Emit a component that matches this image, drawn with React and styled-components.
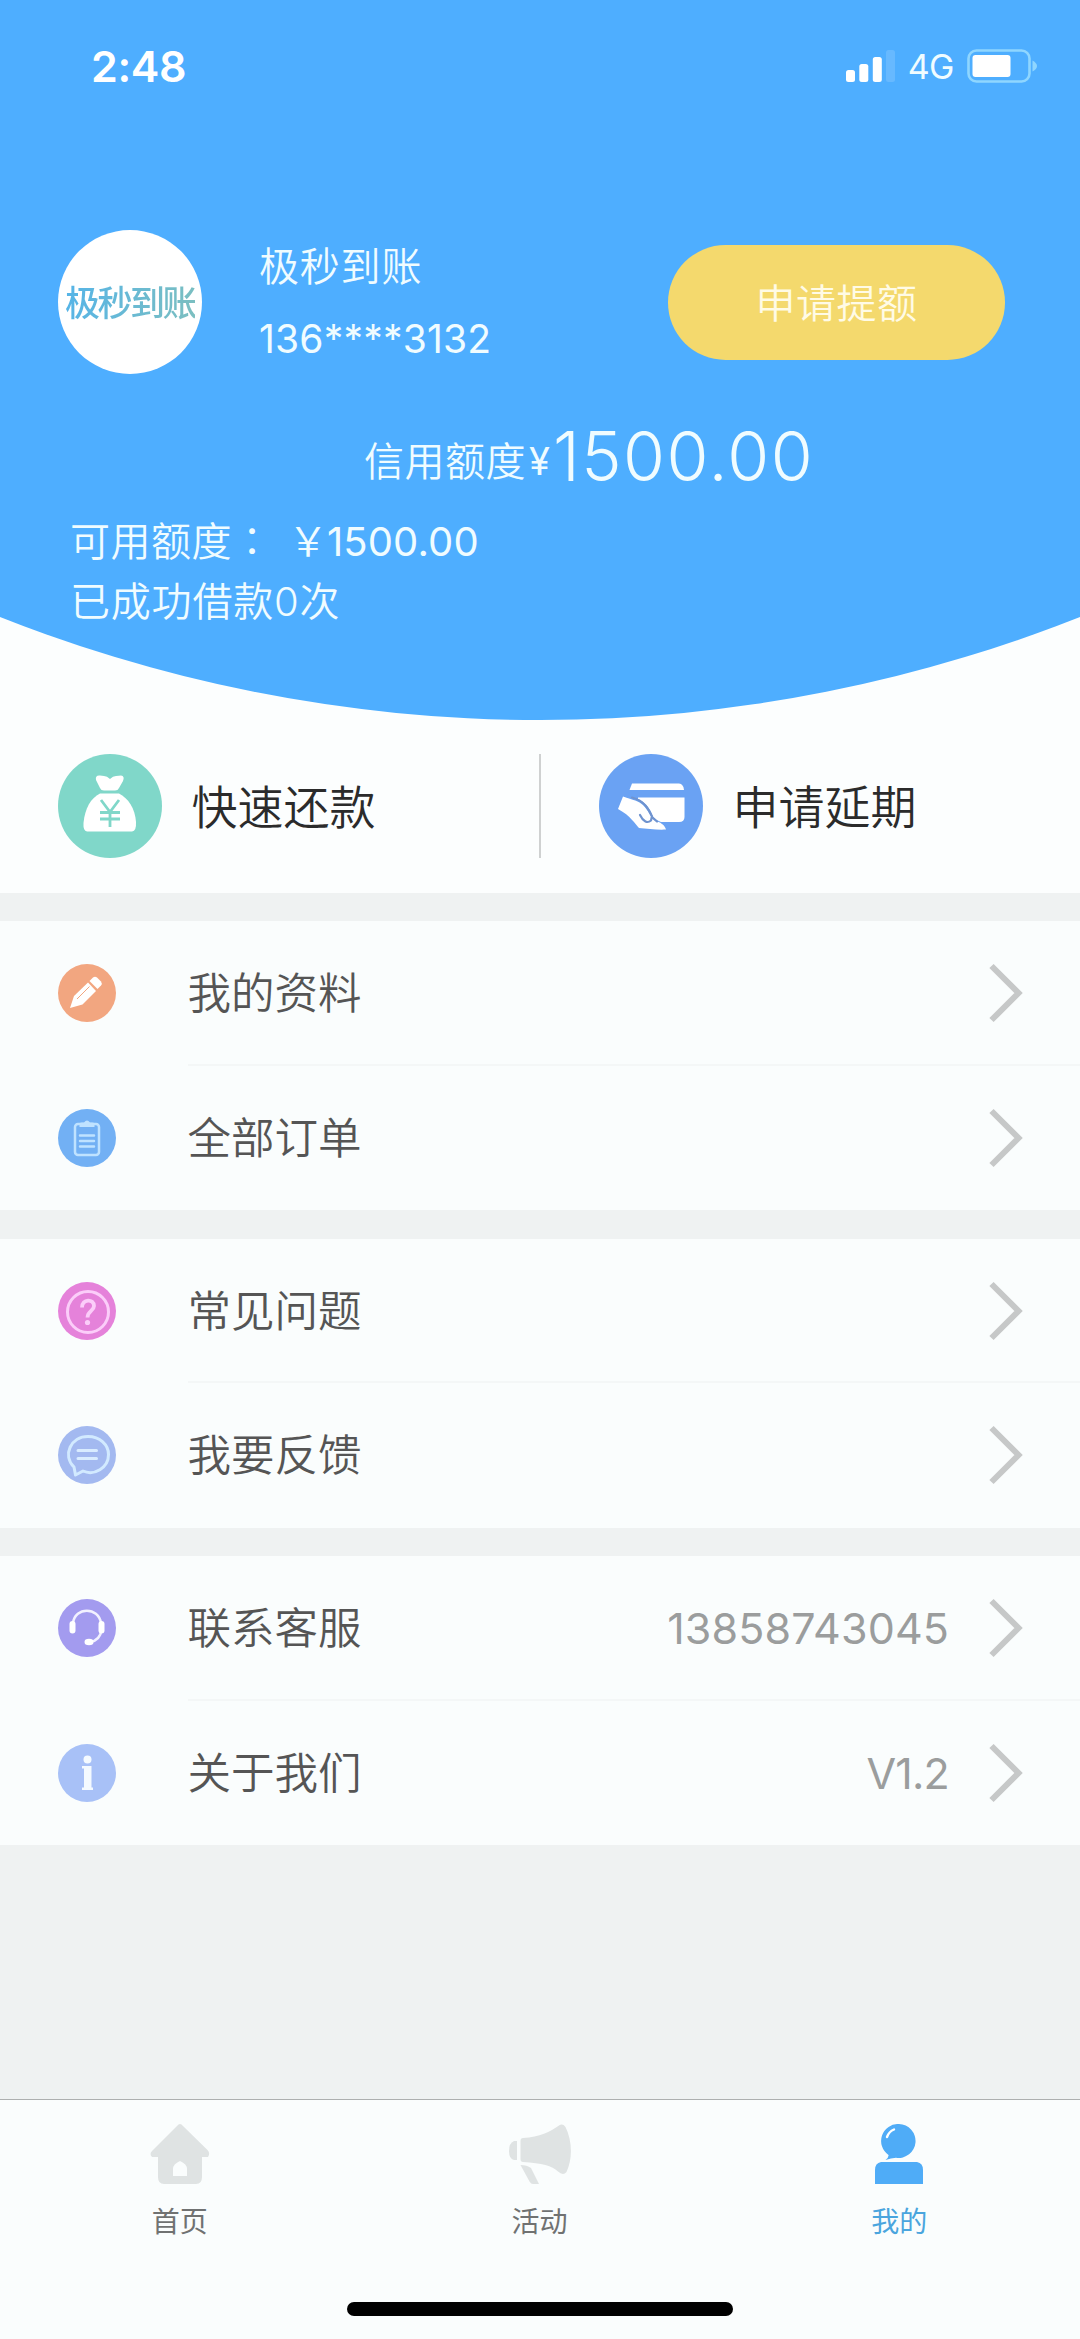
import React from 'react';
import styled, { createGlobalStyle } from 'styled-components';

const menuGroups = [
  [
    { label: '我的资料', icon: <PencilIcon /> },
    { label: '全部订单', icon: <OrderIcon /> },
  ],
  [
    { label: '常见问题', icon: <QuestionIcon /> },
    { label: '我要反馈', icon: <FeedbackIcon /> },
  ],
  [
    { label: '联系客服', icon: <ServiceIcon />, value: '13858743045' },
    { label: '关于我们', icon: <InfoIcon />, value: 'V1.2', tight: true },
  ],
];

const tabs = [
  { label: '首页', icon: <HomeIcon /> },
  { label: '活动', icon: <HornIcon /> },
  { label: '我的', icon: <MineIcon />, active: true },
];

export default function App() {
  return (
    <>
      <GlobalStyle />
      <Page>
        <Header>
          <StatusBar>
            <Time>2:48</Time>
            <StatusRight>
              <SignalIcon />
              <Network>4G</Network>
              <BatteryIcon />
            </StatusRight>
          </StatusBar>

          <Profile>
            <Avatar>
              <AvatarText>极秒到账</AvatarText>
            </Avatar>
            <UserInfo>
              <UserName>极秒到账</UserName>
              <Phone>136****3132</Phone>
            </UserInfo>
            <RaiseBtn type="button">申请提额</RaiseBtn>
          </Profile>

          <Credit>
            <CreditLabel>信用额度</CreditLabel>
            <CreditSign>¥</CreditSign>
            <CreditValue>1500.00</CreditValue>
          </Credit>
          <Available>
            <AvailableLabel>可用额度：</AvailableLabel>
            <AvailableSign>￥</AvailableSign>
            <AvailableValue>1500.00</AvailableValue>
          </Available>
          <LoanCount>已成功借款0次</LoanCount>
        </Header>

        <Actions>
          <Action>
            <MoneyBagIcon />
            <ActionText>快速还款</ActionText>
          </Action>
          <Divider />
          <Action>
            <CardIcon />
            <ActionText>申请延期</ActionText>
          </Action>
        </Actions>

        <Menu>
          {menuGroups.map((group) => (
            <MenuGroup key={group[0].label}>
              {group.map((item) => (
                <MenuRow key={item.label}>
                  {item.icon}
                  <MenuBody>
                    <MenuLabel>{item.label}</MenuLabel>
                    {item.value && <MenuValue $tight={item.tight}>{item.value}</MenuValue>}
                    <ArrowIcon />
                  </MenuBody>
                </MenuRow>
              ))}
            </MenuGroup>
          ))}
        </Menu>

        <Footer>
          <TabBar>
            {tabs.map((tab) => (
              <Tab key={tab.label}>
                {tab.icon}
                <TabText $active={tab.active}>{tab.label}</TabText>
              </Tab>
            ))}
          </TabBar>
          <HomeIndicator />
        </Footer>
      </Page>
    </>
  );
}

function SignalIcon() {
  return (
    <svg width="50" height="32" viewBox="0 0 50 32" fill="#fff">
      <rect x="0" y="20" width="9" height="12" rx="2.5" />
      <rect x="13.3" y="14" width="9" height="18" rx="2.5" />
      <rect x="26.8" y="7" width="9" height="25" rx="2.5" />
      <rect x="40" y="0" width="9" height="32" rx="2.5" opacity="0.14" />
    </svg>
  );
}

function BatteryIcon() {
  return (
    <svg width="71" height="34" viewBox="0 0 71 34">
      <rect x="1.5" y="1.5" width="61" height="31" rx="8" fill="none" stroke="#8fd6ff" strokeWidth="2.6" />
      <rect x="5.5" y="6" width="38" height="22" rx="3" fill="#fff" />
      <path d="M65.500 11.500 Q70 14 70 17 Q70 20 65.500 22.500Z" fill="#8fd6ff" />
    </svg>
  );
}

function MoneyBagIcon() {
  return (
    <svg width="104" height="104" viewBox="0 0 104 104">
      <circle cx="52" cy="52" r="52" fill="#80d7c9" />
      <path
        d="M38 26 Q37 21 42 21.500 Q44 21.500 46 22 Q49 22 52 25 Q55 22 58 22 Q61 21.500 63 21.500 Q67 22 65 27 L61 34 Q60 36.500 57 36.500 H46 Q43 36.500 42 34Z"
        fill="#fff"
      />
      <path
        d="M42 39.500 H61 C70 44 77 54 78 68 Q78.500 77 74 77.500 H29 Q25 77 25.500 69 C27 54 33 44 42 39.500Z"
        fill="#fff"
      />
      <path
        d="M43 46 L52 58 L61 46 M52 58 V73 M42 58.500 H62 M42 65 H62"
        fill="none"
        stroke="#80d7c9"
        strokeWidth="2.8"
      />
    </svg>
  );
}

function CardIcon() {
  return (
    <svg width="104" height="104" viewBox="0 0 104 104">
      <circle cx="52" cy="52" r="52" fill="#6aa2f3" />
      <path d="M33 29.500 H80 Q84.500 30 85 36 H30.500Z" fill="#fff" />
      <path
        d="M39 43.500 H85.500 V63 Q85.500 68 80 68 H62 Q56.500 66 54 63 C51 54 46 48 39 45Z"
        fill="#fff"
      />
      <path
        d="M24 42.500 C34 46 40 47 44 51 C50 57 51 63 56 66.500 C61 68 66 71 67 75.500 C60 76 48 75 40 74 C36 70 32 62 19 55Z"
        fill="#fff"
      />
      <path
        d="M33 43.500 C46 47 50 56 53.500 63.500 L58 67.500 M41 61 C44 67 48 70 52 66.500 L53 62"
        fill="none"
        stroke="#6f93cf"
        strokeWidth="2.2"
        strokeLinecap="round"
      />
    </svg>
  );
}

function PencilIcon() {
  return (
    <svg width="58" height="58" viewBox="0 0 58 58">
      <circle cx="29" cy="29" r="29" fill="#f2a680" />
      <path d="M12 44 L16 32 L30 18.500 L38 27 L24.500 40.500Z" fill="#fff" />
      <path d="M31.500 17 L35 13.500 Q37 12 39 13.500 L43 17.500 Q44.500 19.500 43 21.500 L39.500 25Z" fill="#fff" />
      <path d="M19 35 L31.500 22.500" stroke="#f2a680" strokeWidth="1" />
    </svg>
  );
}

function OrderIcon() {
  return (
    <svg width="58" height="58" viewBox="0 0 58 58">
      <circle cx="29" cy="29" r="29" fill="#72b0f4" />
      <g fill="none" stroke="#bfe2ff" strokeWidth="2.5" strokeLinecap="round">
        <rect x="17" y="15" width="24" height="31" rx="3" />
        <path d="M22 26.500 H36 M22 32 H36 M22 37.500 H36" />
      </g>
      <path d="M21.500 18 V14.500 Q22 13.500 24 13.500 H26 Q29 9.500 32 13.500 H34 Q36 13.500 36.500 14.500 V18Z" fill="#bfe2ff" />
    </svg>
  );
}

function QuestionIcon() {
  return (
    <svg width="58" height="58" viewBox="0 0 58 58">
      <circle cx="29" cy="29" r="29" fill="#e582da" />
      <g fill="none" stroke="#fbcdf9" strokeWidth="3">
        <circle cx="30" cy="30" r="20.500" />
        <path d="M24 25.500 C24 16.500 36 16.500 36 24 C36 29 29.500 29 29.500 35.500" strokeWidth="3.800" />
      </g>
      <circle cx="29.500" cy="40.500" r="2.600" fill="#fbcdf9" />
    </svg>
  );
}

function FeedbackIcon() {
  return (
    <svg width="58" height="58" viewBox="0 0 58 58">
      <circle cx="29" cy="29" r="29" fill="#a3b9f0" />
      <path
        d="M17.500 49 L16 41 C4 29 13 10.500 30 10.500 C42 10.500 50.500 19 50.500 28.500 C50.500 42 36 50 25 45 Z"
        fill="none"
        stroke="#d2eaff"
        strokeWidth="3"
        strokeLinejoin="round"
      />
      <path d="M20 24.500 H38.500 M20 32.500 H38.500" stroke="#d9ecff" strokeWidth="3" strokeLinecap="round" />
    </svg>
  );
}

function ServiceIcon() {
  return (
    <svg width="58" height="58" viewBox="0 0 58 58">
      <circle cx="29" cy="29" r="29" fill="#a39bef" />
      <path
        d="M15 24 C17 7.500 40.500 7.500 43 24 M43.500 31 C42.500 38 39 42 32 43"
        fill="none"
        stroke="#f2f1ff"
        strokeWidth="2.500"
      />
      <rect x="11.500" y="22" width="6" height="12.500" rx="3" fill="#fff" />
      <rect x="40.500" y="22" width="6" height="12.500" rx="3" fill="#fff" />
      <ellipse cx="31" cy="43" rx="4.500" ry="3.300" fill="#fff" />
    </svg>
  );
}

function InfoIcon() {
  return (
    <svg width="58" height="58" viewBox="0 0 58 58">
      <circle cx="29" cy="29" r="29" fill="#a8c1f7" />
      <circle cx="29.500" cy="15.500" r="4" fill="#f4faff" />
      <path d="M24 22 H33.500 V43.500 H35 V46 H24 V43.500 H26 V24.500 H24Z" fill="#f4faff" />
    </svg>
  );
}

function ArrowIcon() {
  return (
    <svg width="34" height="60" viewBox="0 0 34 60">
      <path d="M2.500 3 L29.500 30 L2.500 57" fill="none" stroke="#c6c8c8" strokeWidth="6" />
    </svg>
  );
}

function HomeIcon() {
  return (
    <svg width="60" height="60" viewBox="0 0 60 60" fill="#dfe3e3">
      <path
        fillRule="evenodd"
        d="M30 0 Q31.500 0 33 2 L57.500 26 Q60.500 29 58 33 H52 V53 Q52 60 46 60 H14 Q8 60 8 53 V33 H2 Q-1 30 2 27 L27 2 Q28.500 0 30 0Z M30 37 Q23 40 23 45 V52 H37 V45 Q37 40 30 37Z"
      />
    </svg>
  );
}

function HornIcon() {
  return (
    <svg width="64" height="60" viewBox="0 0 64 60" fill="#dfe3e3">
      <path d="M9 17 V36 H6 Q1 35 1 27 Q1 19 6 17Z" />
      <path d="M15 14 C32 13 42 8 51 1.500 Q54.500 -1 57.500 3 C64 16 65 34 58.500 48 Q55 52 50 47.500 C44 42 34 39 15 38 Q12.500 38 12.500 35 V17 Q12.500 14 15 14Z" />
      <path d="M12.500 41 Q19 41 23 44 L31 60 H25 Q23 60 21.500 57.500Z" />
    </svg>
  );
}

function MineIcon() {
  return (
    <svg width="50" height="60" viewBox="0 0 50 60" fill="#4facf7">
      <path d="M25 0 A17 17 0 1 1 22 33.800 Q17 34 11.500 36 Q15 33 14.500 31 A17 17 0 0 1 25 0Z" />
      <path d="M7 38 H43 Q49 39 49 46 V60 H1 V46 Q1 39 7 38Z" />
      <path d="M13 13 Q15 7.500 20 5.500" fill="none" stroke="#fff" strokeWidth="2.400" strokeLinecap="round" />
    </svg>
  );
}

const GlobalStyle = createGlobalStyle`
  * {
    box-sizing: border-box;
  }

  body {
    margin: 0;
    font-family: Inter, 'Noto Sans CJK SC', sans-serif;
  }

  svg {
    display: block;
    flex-shrink: 0;
  }
`;

const Page = styled.div`
  display: flex;
  flex-direction: column;
  width: 1080px;
  height: 2339px;
  overflow: hidden;
  background-color: #fcfefe;
`;

const Header = styled.header`
  flex-shrink: 0;
  height: 720px;
  background-color: #4eaeff;
  color: #f0fcff;
  clip-path: circle(1467px at 50% -747px);
`;

const StatusBar = styled.div`
  display: flex;
  align-items: center;
  justify-content: space-between;
  height: 132px;
  padding: 0 42px 0 91px;
`;

const Time = styled.span`
  color: #fff;
  font-size: 43px;
  font-weight: 600;
  letter-spacing: -0.4px;
`;

const StatusRight = styled.div`
  display: flex;
  align-items: center;
`;

const Network = styled.span`
  margin: 2px 13px 0 12px;
  font-size: 34px;
  letter-spacing: -0.5px;
  line-height: 40px;
`;

const Profile = styled.div`
  display: flex;
  align-items: center;
  height: 144px;
  margin-top: 98px;
  padding: 0 75px 0 58px;
`;

const Avatar = styled.div`
  display: flex;
  align-items: center;
  justify-content: center;
  width: 144px;
  height: 144px;
  border-radius: 50%;
  background-color: #fff;
`;

const AvatarText = styled.span`
  padding-top: 2px;
  background-image: linear-gradient(100deg, #55b4e8, #7cbfc0);
  background-clip: text;
  color: transparent;
  font-size: 35px;
  font-weight: 500;
  letter-spacing: -2.5px;
  line-height: 40px;
  white-space: nowrap;
`;

const UserInfo = styled.div`
  display: flex;
  flex: 1;
  flex-direction: column;
  gap: 24px;
  margin-left: 57px;
  padding-top: 2px;
  font-size: 40px;
  font-weight: 350;
  line-height: 48px;
`;

const UserName = styled.span`
  letter-spacing: 0.8px;
`;

const Phone = styled.span`
  font-size: 39px;
  font-weight: 400;
  letter-spacing: 0.2px;
`;

const RaiseBtn = styled.button`
  width: 337px;
  height: 115px;
  padding: 0 0 3px;
  border: none;
  border-radius: 58px;
  background-color: #f4d96d;
  color: #fffbe6;
  font-family: inherit;
  font-size: 40px;
  font-weight: 350;
  letter-spacing: 0.5px;
`;

const Credit = styled.div`
  display: flex;
  align-items: flex-start;
  height: 80px;
  margin-top: 42px;
  padding-left: 364px;
  font-weight: 350;
  line-height: 80px;
`;

const CreditLabel = styled.span`
  padding-top: 6px;
  font-size: 40px;
  letter-spacing: 0.5px;
`;

const CreditSign = styled.span`
  width: 27px;
  padding: 5px 0 0 3px;
  font-size: 38px;
  font-weight: 400;
`;

const CreditValue = styled.span`
  font-size: 68px;
  letter-spacing: 1.5px;
`;

const Available = styled.div`
  display: flex;
  height: 60px;
  margin-top: 16px;
  padding-left: 70px;
  font-size: 40px;
  font-weight: 350;
  line-height: 60px;
`;

/* the TC face centres the full-width colon in its box */
const AvailableLabel = styled.span`
  width: 218px;
  font-family: Inter, 'Noto Sans CJK TC', sans-serif;
  letter-spacing: 0.5px;
`;

const AvailableSign = styled.span`
  width: 39px;
`;

const AvailableValue = styled.span`
  font-weight: 400;
  letter-spacing: 0.1px;
`;

const LoanCount = styled.div`
  padding-left: 70px;
  font-size: 40px;
  font-weight: 350;
  letter-spacing: 0.8px;
  line-height: 60px;
`;

const Actions = styled.div`
  display: flex;
  flex-shrink: 0;
  align-items: center;
  height: 173px;
  padding-bottom: 1px;
`;

const Action = styled.div`
  display: flex;
  flex: 1;
  align-items: center;
  gap: 29.5px;
  padding-left: 58px;
`;

const ActionText = styled.span`
  padding-top: 1px;
  color: #2b2b2b;
  font-size: 46px;
  font-weight: 350;
  line-height: 60px;
`;

const Divider = styled.div`
  width: 2px;
  height: 104px;
  background-color: #cfd1d1;
`;

const Menu = styled.main`
  display: flex;
  flex: 1;
  flex-direction: column;
  gap: 28.5px;
  padding-top: 28px;
  background-color: #eff2f2;
`;

const MenuGroup = styled.section`
  background-color: #fafdfd;
`;

const MenuRow = styled.div`
  display: flex;
  align-items: center;
  height: 144.5px;
  padding-left: 57.5px;
`;

const MenuBody = styled.div`
  display: flex;
  flex: 1;
  align-items: center;
  height: 100%;
  margin-left: 72px;
  padding-right: 57px;

  ${MenuRow}:first-child & {
    padding-top: 2px;
    border-bottom: 2px solid #f4f7f7;
  }
`;

const MenuLabel = styled.span`
  flex: 1;
  color: #555;
  font-size: 43.5px;
  font-weight: 350;
  line-height: 60px;
`;

const MenuValue = styled.span`
  margin-right: 40px;
  color: #9b9d9d;
  font-size: 43px;
  font-weight: 400;
  letter-spacing: ${({ $tight }) => ($tight ? '-0.8px' : '0.1px')};
`;

const Footer = styled.footer`
  display: flex;
  flex-shrink: 0;
  flex-direction: column;
  align-items: center;
  justify-content: space-between;
  height: 240px;
  padding-bottom: 23px;
  border-top: 1px solid #adb0b0;
  background-color: #fafdfd;
`;

const TabBar = styled.nav`
  display: flex;
  width: 100%;
  padding: 24px 1px 0 0;
`;

const Tab = styled.div`
  display: flex;
  flex: 1;
  flex-direction: column;
  align-items: center;
  gap: 18px;
`;

const TabText = styled.span`
  color: ${({ $active }) => ($active ? '#4aa5de' : '#707272')};
  font-size: 28px;
  line-height: 40px;
`;

const HomeIndicator = styled.div`
  width: 386px;
  height: 14px;
  border-radius: 7px;
  background-color: #000;
`;
